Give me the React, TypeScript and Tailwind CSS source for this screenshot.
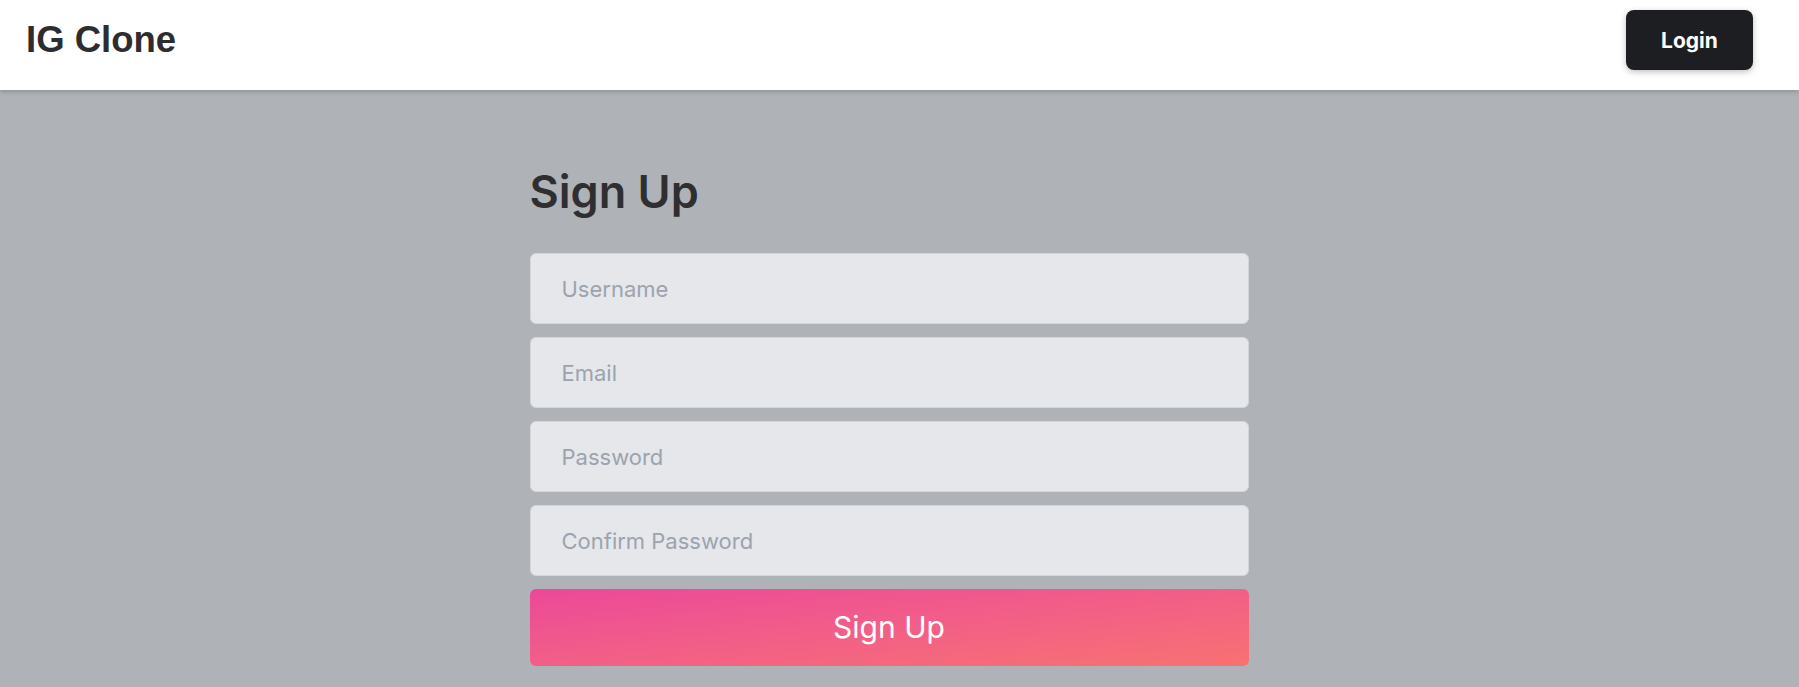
import React from "react";

export default function App() {
  return (
    <div className="min-h-[687px] bg-[#afb2b6]" style={{ fontFamily: "Inter, 'Noto Sans', sans-serif" }}>
      <header className="relative z-10 flex h-[90px] items-start justify-between bg-white pl-[26px] pr-[46px] pt-[10px] shadow-[0_2px_4px_rgba(0,0,0,0.18)]">
        <div className="flex h-[60px] items-center">
          <span className="text-[36.5px] font-bold leading-none text-[#2d2d2f]" style={{ fontFamily: "'Liberation Sans', Arial, sans-serif" }}>
            IG Clone
          </span>
        </div>
        <button className="flex h-[60px] w-[127px] items-center justify-center rounded-lg bg-[#1d1e22] pt-px text-[21px] font-bold text-white shadow-[0_2px_6px_rgba(0,0,0,0.25)]">
          Login
        </button>
      </header>
      <main className="mx-auto w-[740px] pt-[79px]">
        <h1 className="mb-[39px] text-[45px] font-semibold leading-none text-[#2f2f32]">Sign Up</h1>
        <form className="flex w-[719px] flex-col gap-[13px]" onSubmit={(e) => e.preventDefault()}>
          {["Username", "Email", "Password", "Confirm Password"].map((p) => (
            <input
              key={p}
              type={p.includes("Password") ? "password" : p === "Email" ? "email" : "text"}
              placeholder={p}
              className="h-[71px] w-full rounded-md border border-[#d3d5da] bg-[#e5e7eb] px-[31px] text-[22px] text-gray-700 outline-none placeholder:text-[#9ca3af]"
            />
          ))}
          <button
            type="submit"
            className="h-[77px] w-full rounded-md bg-linear-to-br from-[#ec4899] to-[#f87171] text-[30px] text-white"
          >
            Sign Up
          </button>
        </form>
      </main>
    </div>
  );
}
